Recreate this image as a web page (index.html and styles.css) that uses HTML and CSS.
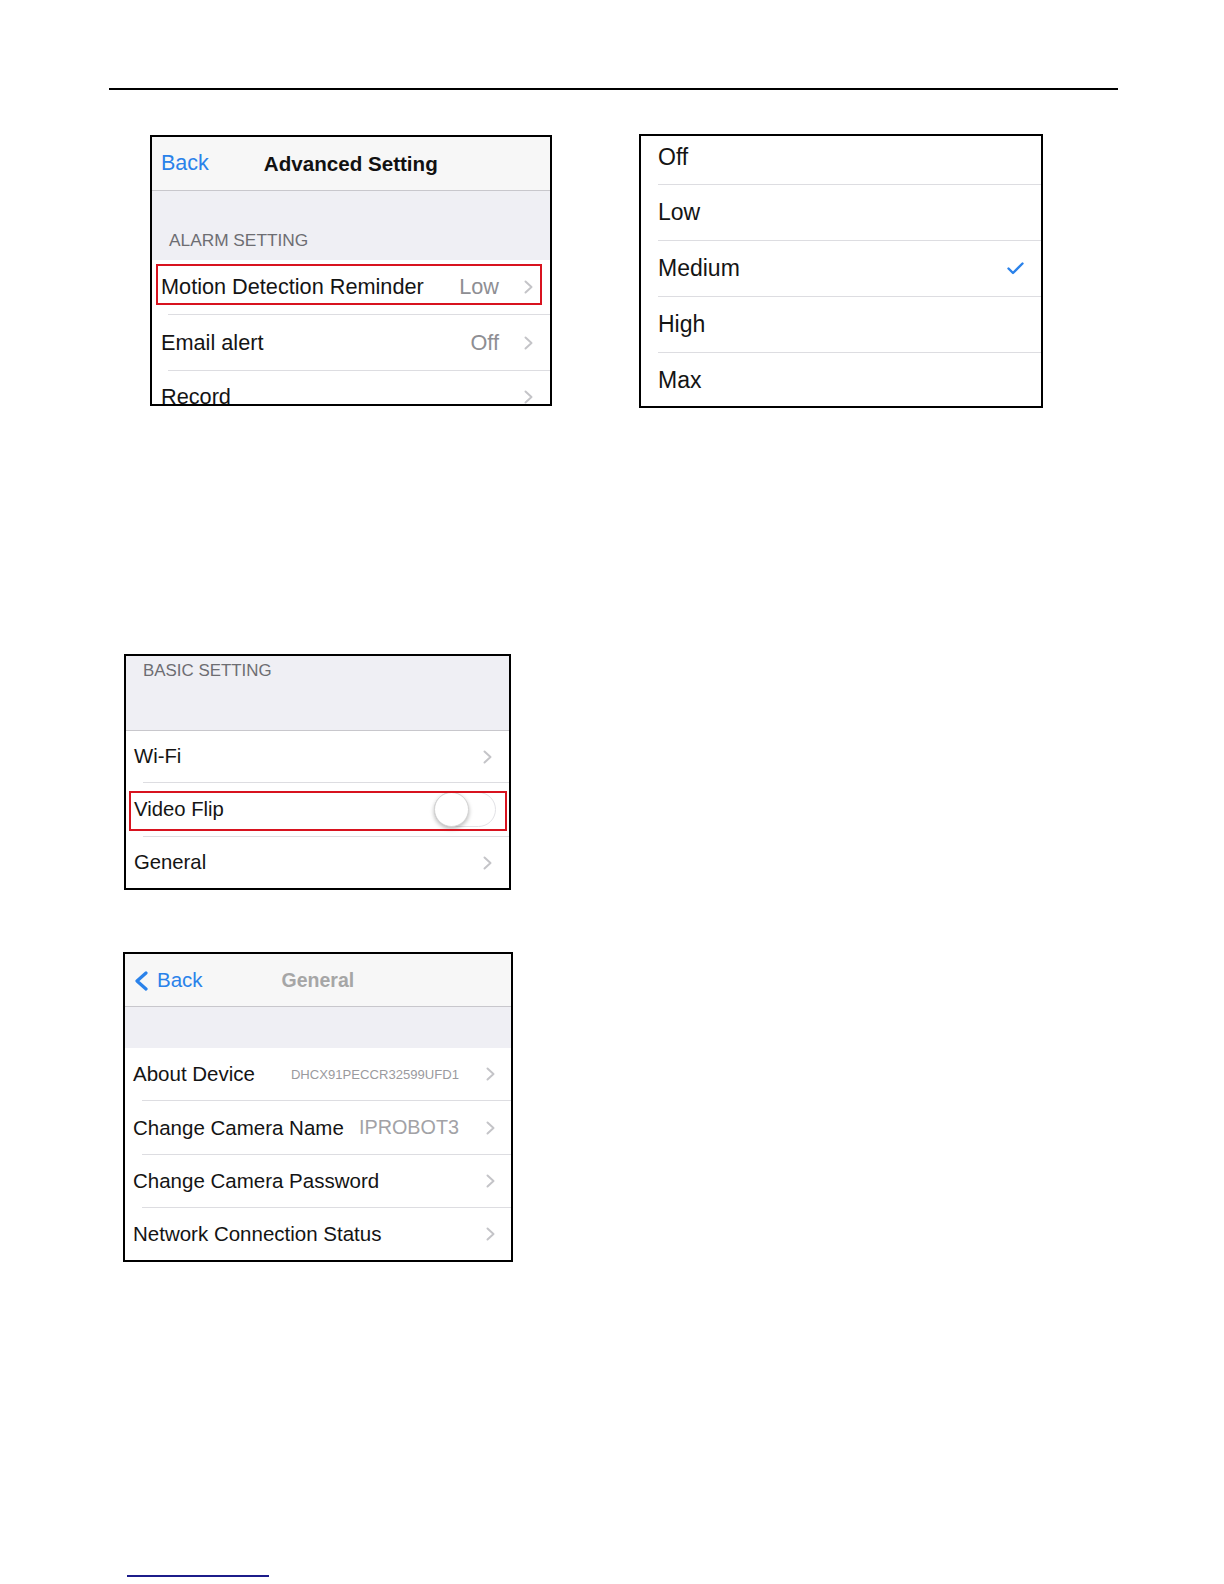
FILE: index.html
```html
<!DOCTYPE html>
<html>
<head>
<meta charset="utf-8">
<link rel="stylesheet" href="styles.css">
</head>
<body>
<div class="page">
  <div class="rule"></div>

  <div class="top-row">
    <div class="panel p1">
      <div class="nav nav1">
        <span class="back">Back</span>
        <span class="title">Advanced Setting</span>
      </div>
      <div class="nav-sep"></div>
      <div class="section s1"><span class="section-label">ALARM SETTING</span></div>
      <div class="row r1a">
        <span class="label">Motion Detection Reminder</span>
        <span class="value">Low</span>
        <svg class="chev" width="9" height="14" viewBox="0 0 9 14"><polyline points="1.5,1.5 7.5,7 1.5,12.5"/></svg>
        <div class="mark mark1"></div>
      </div>
      <div class="sep sep1"></div>
      <div class="row r1b">
        <span class="label">Email alert</span>
        <span class="value">Off</span>
        <svg class="chev" width="9" height="14" viewBox="0 0 9 14"><polyline points="1.5,1.5 7.5,7 1.5,12.5"/></svg>
      </div>
      <div class="sep sep1"></div>
      <div class="row r1b r1last">
        <span class="label">Record</span>
        <svg class="chev" width="9" height="14" viewBox="0 0 9 14"><polyline points="1.5,1.5 7.5,7 1.5,12.5"/></svg>
      </div>
    </div>

    <div class="panel p2">
      <div class="row r2first"><span class="label">Off</span></div>
      <div class="sep sep2"></div>
      <div class="row r2"><span class="label">Low</span></div>
      <div class="sep sep2"></div>
      <div class="row r2">
        <span class="label">Medium</span>
        <svg class="check" width="17" height="13" viewBox="0 0 17 13"><polyline points="1.5,6.5 6,11 15.5,1.5"/></svg>
      </div>
      <div class="sep sep2"></div>
      <div class="row r2"><span class="label">High</span></div>
      <div class="sep sep2"></div>
      <div class="row r2"><span class="label">Max</span></div>
    </div>
  </div>

  <div class="panel p3">
    <div class="section s3"><span class="section-label">BASIC SETTING</span></div>
    <div class="nav-sep"></div>
    <div class="row r3 h51">
      <span class="label">Wi-Fi</span>
      <svg class="chev" width="9" height="14" viewBox="0 0 9 14"><polyline points="1.5,1.5 7.5,7 1.5,12.5"/></svg>
    </div>
    <div class="sep sep3"></div>
    <div class="row r3 h53">
      <span class="label">Video Flip</span>
      <div class="toggle"><div class="knob"></div></div>
      <div class="mark mark3"></div>
    </div>
    <div class="sep sep3"></div>
    <div class="row r3 h51">
      <span class="label">General</span>
      <svg class="chev" width="9" height="14" viewBox="0 0 9 14"><polyline points="1.5,1.5 7.5,7 1.5,12.5"/></svg>
    </div>
  </div>

  <div class="panel p4">
    <div class="nav nav4">
      <svg class="back-chev" width="16" height="20" viewBox="0 0 16 20"><polyline points="13,2 4,10 13,18"/></svg>
      <span class="back back4">Back</span>
      <span class="title title4">General</span>
    </div>
    <div class="nav-sep"></div>
    <div class="section s4"></div>
    <div class="row r4 h52">
      <span class="label">About Device</span>
      <span class="value small">DHCX91PECCR32599UFD1</span>
      <svg class="chev" width="9" height="14" viewBox="0 0 9 14"><polyline points="1.5,1.5 7.5,7 1.5,12.5"/></svg>
    </div>
    <div class="sep sep4"></div>
    <div class="row r4 h53">
      <span class="label">Change Camera Name</span>
      <span class="value v4">IPROBOT3</span>
      <svg class="chev" width="9" height="14" viewBox="0 0 9 14"><polyline points="1.5,1.5 7.5,7 1.5,12.5"/></svg>
    </div>
    <div class="sep sep4"></div>
    <div class="row r4 h52">
      <span class="label">Change Camera Password</span>
      <svg class="chev" width="9" height="14" viewBox="0 0 9 14"><polyline points="1.5,1.5 7.5,7 1.5,12.5"/></svg>
    </div>
    <div class="sep sep4"></div>
    <div class="row r4 h52">
      <span class="label">Network Connection Status</span>
      <svg class="chev" width="9" height="14" viewBox="0 0 9 14"><polyline points="1.5,1.5 7.5,7 1.5,12.5"/></svg>
    </div>
  </div>

  <div class="footer-line"></div>
</div>
</body>
</html>
```

FILE: styles.css
```css
* { box-sizing: border-box; }

html, body {
  margin: 0;
  padding: 0;
  background: #ffffff;
}

body {
  font-family: "Liberation Sans", Arial, Helvetica, sans-serif;
  color: #141414;
}

.page {
  padding-top: 88px;
  padding-bottom: 8px;
}

.rule {
  margin-left: 109px;
  width: 1009px;
  height: 2px;
  background: #000;
}

.top-row {
  display: flex;
  align-items: flex-start;
  gap: 87px;
  margin-top: 44px;
  padding-left: 150px;
}

.panel {
  border: 2px solid #000;
  background: #fff;
  overflow: hidden;
  display: flex;
  flex-direction: column;
}

.p1 { width: 402px; height: 271px; margin-top: 1px; }
.p2 { width: 404px; height: 274px; }
.p3 { width: 387px; height: 236px; margin-top: 246px; margin-left: 124px; }
.p4 { width: 390px; height: 310px; margin-top: 62px; margin-left: 123px; }

/* navigation bars */
.nav {
  display: flex;
  align-items: center;
  background: #f7f7f7;
  flex: none;
}
.nav1 { height: 53px; padding-left: 9px; gap: 55px; }
.nav4 { height: 52px; padding-left: 8px; }

.nav-sep {
  height: 1px;
  background: #c8c7cc;
  flex: none;
}

.back {
  color: #2a82ea;
  font-size: 21.5px;
}
.title {
  font-weight: bold;
  font-size: 20.6px;
  color: #111;
}
.back-chev {
  flex: none;
  margin-top: 2px;
}
.back-chev polyline {
  fill: none;
  stroke: #2a82ea;
  stroke-width: 3.2;
  stroke-linecap: round;
  stroke-linejoin: round;
}
.back4 { font-size: 20.5px; margin-left: 8px; }
.title4 { font-size: 19.5px; color: #a6a6a6; margin-left: 79px; }

/* grouped section backgrounds */
.section {
  background: #efeff4;
  flex: none;
  display: flex;
}
.section-label {
  color: #6d6d72;
  font-size: 17.3px;
  line-height: 20px;
}
.s1 { height: 69px; align-items: flex-end; padding: 0 0 10px 17px; }
.s3 { height: 74px; align-items: flex-start; padding: 5px 0 0 17px; }
.s3 .section-label { font-size: 16.9px; }
.s4 { height: 41px; }

/* rows */
.row {
  display: flex;
  align-items: center;
  flex: none;
  position: relative;
}
.label {
  flex: 1;
  white-space: nowrap;
}
.value {
  color: #8e8e93;
  white-space: nowrap;
}
.chev { flex: none; }
.chev polyline {
  fill: none;
  stroke: #c4c4c8;
  stroke-width: 2;
  stroke-linecap: round;
  stroke-linejoin: round;
}

.sep {
  height: 1px;
  background: #dddde1;
  flex: none;
}

/* panel 1 rows */
.r1a, .r1b { padding: 0 17px 0 9px; font-size: 21.7px; }
.r1a { height: 54px; }
.r1b { height: 55px; }
.r1last { padding-bottom: 4px; }
.r1a .value, .r1b .value { margin-right: 25px; }
.sep1 { margin-left: 16px; }

/* panel 2 rows */
.r2first, .r2 { padding: 0 17px 0 17px; font-size: 23px; }
.r2first { height: 48px; padding-bottom: 6px; }
.r2 { height: 55px; }
.sep2 { margin-left: 17px; }
.check polyline {
  fill: none;
  stroke: #2a82ea;
  stroke-width: 2.4;
  stroke-linecap: round;
  stroke-linejoin: round;
}
.check { flex: none; }

/* panel 3 rows */
.r3 { padding: 0 17px 0 8px; font-size: 20.3px; }
.h48 { height: 48px; }
.h51 { height: 51px; }
.h52 { height: 52px; }
.h53 { height: 53px; }
.sep3 { margin-left: 17px; }

.toggle {
  flex: none;
  width: 62px;
  height: 35px;
  margin-right: -4px;
  border: 1.5px solid #e2e2e6;
  border-radius: 18px;
  background: #fff;
  display: flex;
  align-items: center;
}
.knob {
  width: 35px;
  height: 35px;
  margin-left: -1.5px;
  border-radius: 50%;
  background: #fff;
  border: 1px solid #d4d4d4;
  box-shadow: 0 2px 4px rgba(0, 0, 0, 0.28);
}

/* panel 4 rows */
.r4 { padding: 0 16px 0 8px; font-size: 20.5px; }
.r4 .value { margin-right: 27px; }
.small { font-size: 13.1px; color: #9a9a9e; }
.v4 { font-size: 19.8px; color: #a2a2a6; }
.sep4 { margin-left: 17px; }

/* red annotation boxes */
.mark {
  position: absolute;
  border: 2px solid #d8131f;
  pointer-events: none;
}
.mark1 { left: 4px; top: 4px; width: 386px; height: 41px; }
.mark3 { left: 3px; top: 8px; width: 378px; height: 40px; }

.footer-line {
  margin-top: 313px;
  margin-left: 127px;
  width: 142px;
  height: 2px;
  background: #1c1c8a;
}
```
